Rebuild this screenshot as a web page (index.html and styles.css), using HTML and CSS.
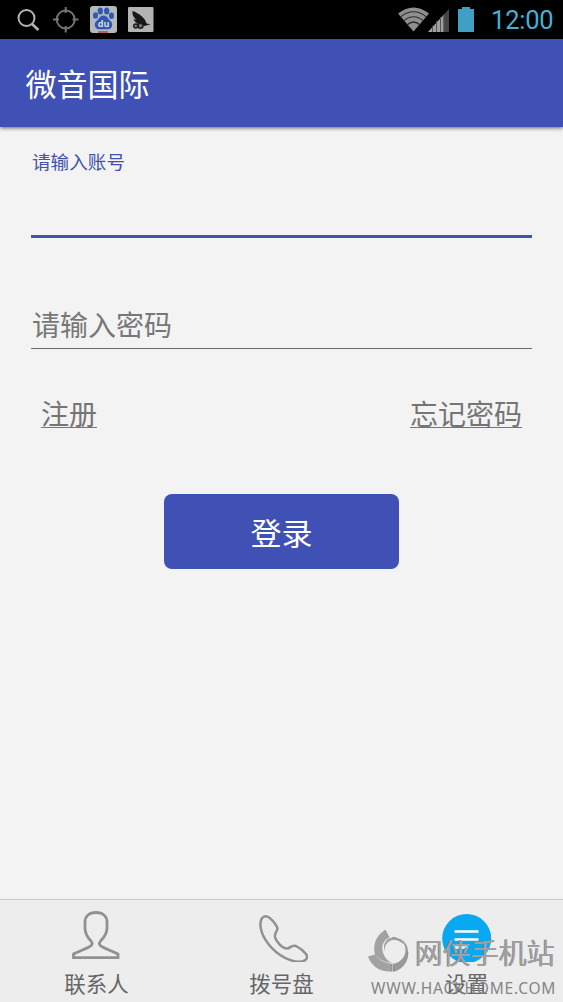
FILE: index.html
```html
<!DOCTYPE html>
<html lang="zh-CN">
<head>
<meta charset="utf-8">
<title>微音国际</title>
<link rel="stylesheet" href="styles.css">
</head>
<body>
<div class="screen">
  <div class="status">
    <svg class="status-left" width="160" height="39" viewBox="0 0 160 39">
      <g fill="none" stroke="#b4b4b4" stroke-width="2">
        <circle cx="26.500" cy="18" r="8"/>
        <path d="M32 24l6.500 6" stroke-width="2.600"/>
      </g>
      <g fill="none" stroke="#747474" stroke-width="2">
        <circle cx="65.700" cy="19.500" r="9"/>
        <path d="M65.700 7v6M65.700 26v6.500M53 19.500h6M72.500 19.500h6"/>
      </g>
      <rect x="90" y="6" width="27" height="27" rx="3" fill="#b5b8bd"/>
      <g fill="#3157b5">
        <ellipse cx="95.500" cy="15.500" rx="2.500" ry="3.300"/>
        <ellipse cx="100.300" cy="11" rx="2.600" ry="3.500"/>
        <ellipse cx="106.700" cy="11" rx="2.600" ry="3.500"/>
        <ellipse cx="111.500" cy="15.800" rx="2.500" ry="3.300"/>
        <path d="M103.500 15.500c-4 0-4.500 4-7 5.500-3 2.500-2 8 2.500 8.200h9c4.500-.2 5.500-5.700 2.500-8.200-2.500-1.500-3-5.500-7-5.500z"/>
      </g>
      <text class="paw-text" x="103.500" y="27" text-anchor="middle">du</text>
      <path d="M98 32h10" stroke="#bd3f4c" stroke-width="1.500"/>
      <rect x="128" y="7" width="25.500" height="25" rx="1" fill="#b3b3b3"/>
      <path d="M132.500 11c6 2 12.500 6.500 14 12.500l4 .8-6 1.700c-5-.5-9.500-3-11-7l3 1c-3-2.500-4.500-5-4-9z" fill="#161616"/>
      <g fill="#777" stroke="#1c1c1c" stroke-width="1.400">
        <circle cx="135.700" cy="26" r="2"/>
        <circle cx="140.500" cy="25.800" r="2.500"/>
      </g>
    </svg>
    <svg class="status-right" width="80" height="39" viewBox="397 0 80 39">
      <path d="M413.500 31.500L398 13.500Q413.500 1.500 429 13.500z" fill="#8f8f8f"/>
      <g fill="none" stroke="#2c2c2c" stroke-width="1.200">
        <path d="M400.500 17Q413.500 6.500 426.500 17"/>
        <path d="M403.500 21Q413.500 12.500 423.500 21"/>
        <path d="M407 25Q413.500 19 420 25"/>
      </g>
      <path d="M428 32L449 9v23z" fill="#454545"/>
      <path d="M428 32L443.500 15V32z" fill="#a0a0a0"/>
      <path d="M432.500 26v6M436.500 21v11M440.500 17v15M444 14v18" stroke="#555"/>
      <path d="M458 9h4V7h8v2h4v23h-16z" fill="#3f9fc5"/>
    </svg>
    <span class="clock">12:00</span>
  </div>
  <header class="appbar">微音国际</header>
  <main class="form">
    <label class="account-label">请输入账号</label>
    <div class="account-input"></div>
    <div class="password-input">请输入密码</div>
    <div class="links"><a class="link">注册</a><a class="link">忘记密码</a></div>
    <button class="login">登录</button>
  </main>
  <nav class="tabs">
    <div class="tab">
      <svg class="tab-icon" width="50" height="52" viewBox="71.500 910 50 52" fill="none" stroke="#919191" stroke-width="2.800">
        <path d="M95.500 912.500c-7 0-11 4-11 9.500v6c0 6 2.500 9.500 6 13 2 2.500 1 4.500-1.500 5.800-5 2.700-10.500 4.400-16 7.200v3.700h44.500V954c-5.500-2.800-11-4.500-16-7.200-2.500-1.300-3.500-3.300-1.500-5.800 3.500-3.500 6.500-7 6.500-13v-6c0-5.500-4-9.500-11-9.500z"/>
      </svg>
      <span class="tab-label">联系人</span>
    </div>
    <div class="tab">
      <svg class="tab-icon" width="52" height="52" viewBox="256 910 52 52" fill="none" stroke="#919191" stroke-width="2.500">
        <path d="M264 916.700c-3 1.300-3.800 5-3.500 10 1.500 12 12 24.500 24 31 7 3.500 14 4.800 18.500 3.600 4-1.300 5-4.300 3-7.300-3-4-7-6.500-10-8-5-1.500-5.500 2.500-9 2.500-5 0-11-7-12-11.500-.6-4 2-5.500 2.500-8.500-1-3-3.500-6.500-7-9.800-2.300-2.200-4-3-6.500-2z"/>
      </svg>
      <span class="tab-label">拨号盘</span>
    </div>
    <div class="tab">
      <svg class="tab-icon" width="50" height="52" viewBox="442 910 50 52">
        <circle cx="466.700" cy="938.500" r="24.500" fill="#08a9f3"/>
        <path d="M454.500 931.500h24M454.500 939.500h24M454.500 947.500h13" stroke="#fff" stroke-width="2.600"/>
      </svg>
      <span class="tab-label">设置</span>
    </div>
  </nav>
  <div class="watermark">
    <svg class="mark-logo" width="42" height="44" viewBox="367 929 42 44">
      <path d="M385 930l4 7.500c-6 3-8 9-6 15 1.500 5 5 9 9 10.500-7-.5-13-3.500-17-8-2.500-10 1-19.500 10-25z" fill="#a2a2a2"/>
      <path d="M368 956.500l7-2c4 5.500 9.500 8.700 17 9.200v7.800c-11 1-20-4.500-24-15z" fill="#a2a2a2"/>
      <path d="M393.500 971.300v-7.500c8-1.800 12.500-8 12-15-.5-4-3-8-7-10.300 6 1.500 9.500 7 9.500 13.500 0 10-6 17.300-14.500 19.300z" fill="#9a9a9a"/>
      <path d="M402.500 943.500c-2.500-2.500-6-4-9.500-3.500-6 1-9 6-8 12-3-8 1-14 7.500-14.500 5 0 8.500 2.500 10 6z" fill="#a2a2a2"/>
      <path d="M385 930l4 7.500M402.500 943.500c-1.500-3.500-5-6-10-6M407.900 952c0 10-6 17.300-14.400 19.300v-7.500M392 971.500v-7.800" fill="none" stroke="#838383" stroke-width=".8"/>
    </svg>
    <div class="mark-name">网侠手机站</div>
    <div class="mark-url">WWW.HACKHOME.COM</div>
  </div>
</div>
</body>
</html>
```
FILE: styles.css
```css
body {
  margin: 0;
  font-family: "Noto Sans CJK SC", sans-serif;
}

.screen {
  position: relative;
  display: flex;
  flex-direction: column;
  width: 563px;
  height: 1002px;
  overflow: hidden;
  background: #f3f3f3;
}

.status {
  display: flex;
  flex: none;
  height: 39px;
  background: #000;
}

.status-left { margin-right: auto; }

.status-right { margin-right: 14px; }

.clock {
  width: 72px;
  font: 25.500px/41px Roboto, sans-serif;
  letter-spacing: -0.200px;
  color: #45b0d8;
  white-space: nowrap;
}

.paw-text {
  font: bold 9px "Open Sans", sans-serif;
  fill: #d5d9e2;
}

.appbar {
  flex: none;
  height: 88px;
  padding-left: 25.500px;
  box-shadow: 0 1px 4px rgba(0, 0, 0, 0.6);
  background: #3f51b5;
  color: #fff;
  font-size: 31px;
  line-height: 87px;
}

.form {
  display: flex;
  flex: 1;
  flex-direction: column;
  padding: 24px 31px 0;
}

.account-label {
  height: 24px;
  padding-left: 1px;
  color: #4351ad;
  font-size: 18.600px;
  line-height: 20px;
}

.account-input {
  height: 60px;
  border-bottom: 3px solid #4252ae;
}

.password-input {
  height: 48px;
  margin-top: 62px;
  padding-left: 1px;
  border-bottom: 1px solid #6c6c6c;
  color: #777;
  font-size: 28px;
  line-height: 48px;
}

.links {
  display: flex;
  justify-content: space-between;
  margin-top: 50px;
  padding: 0 10px;
}

.link {
  height: 28px;
  border-bottom: 1px solid #757575;
  color: #757575;
  font-size: 28px;
  line-height: 28px;
}

.login {
  align-self: center;
  width: 235px;
  height: 75px;
  margin-top: 66px;
  padding: 0;
  border: 0;
  border-radius: 8px;
  background: #3f51b5;
  color: #fff;
  font-family: inherit;
  font-size: 31px;
  line-height: 75px;
}

.tabs {
  display: flex;
  flex: none;
  box-sizing: border-box;
  height: 103px;
  padding: 0 4px;
  border-top: 1px solid #c9c9c9;
  background: #ededed;
}

.tab {
  display: flex;
  flex: 1;
  flex-direction: column;
  align-items: center;
  padding-top: 10px;
}

.tab-label {
  margin-top: 8px;
  color: #666;
  font-size: 21.500px;
  line-height: 26px;
}

.watermark {
  position: absolute;
  left: 367px;
  top: 929px;
  display: grid;
  grid-template-columns: 48px auto;
  grid-template-rows: 50px 18px;
}

.mark-name {
  color: #a0a0a0;
  font-size: 28px;
  font-weight: 400;
  line-height: 46px;
  text-shadow: -0.700px -0.500px 0 #858585;
  white-space: nowrap;
}

.mark-url {
  grid-column: 1 / -1;
  padding-left: 4px;
  color: #858585;
  font: 15.500px/18px "Noto Sans", sans-serif;
  letter-spacing: 0.800px;
  white-space: nowrap;
}
```
